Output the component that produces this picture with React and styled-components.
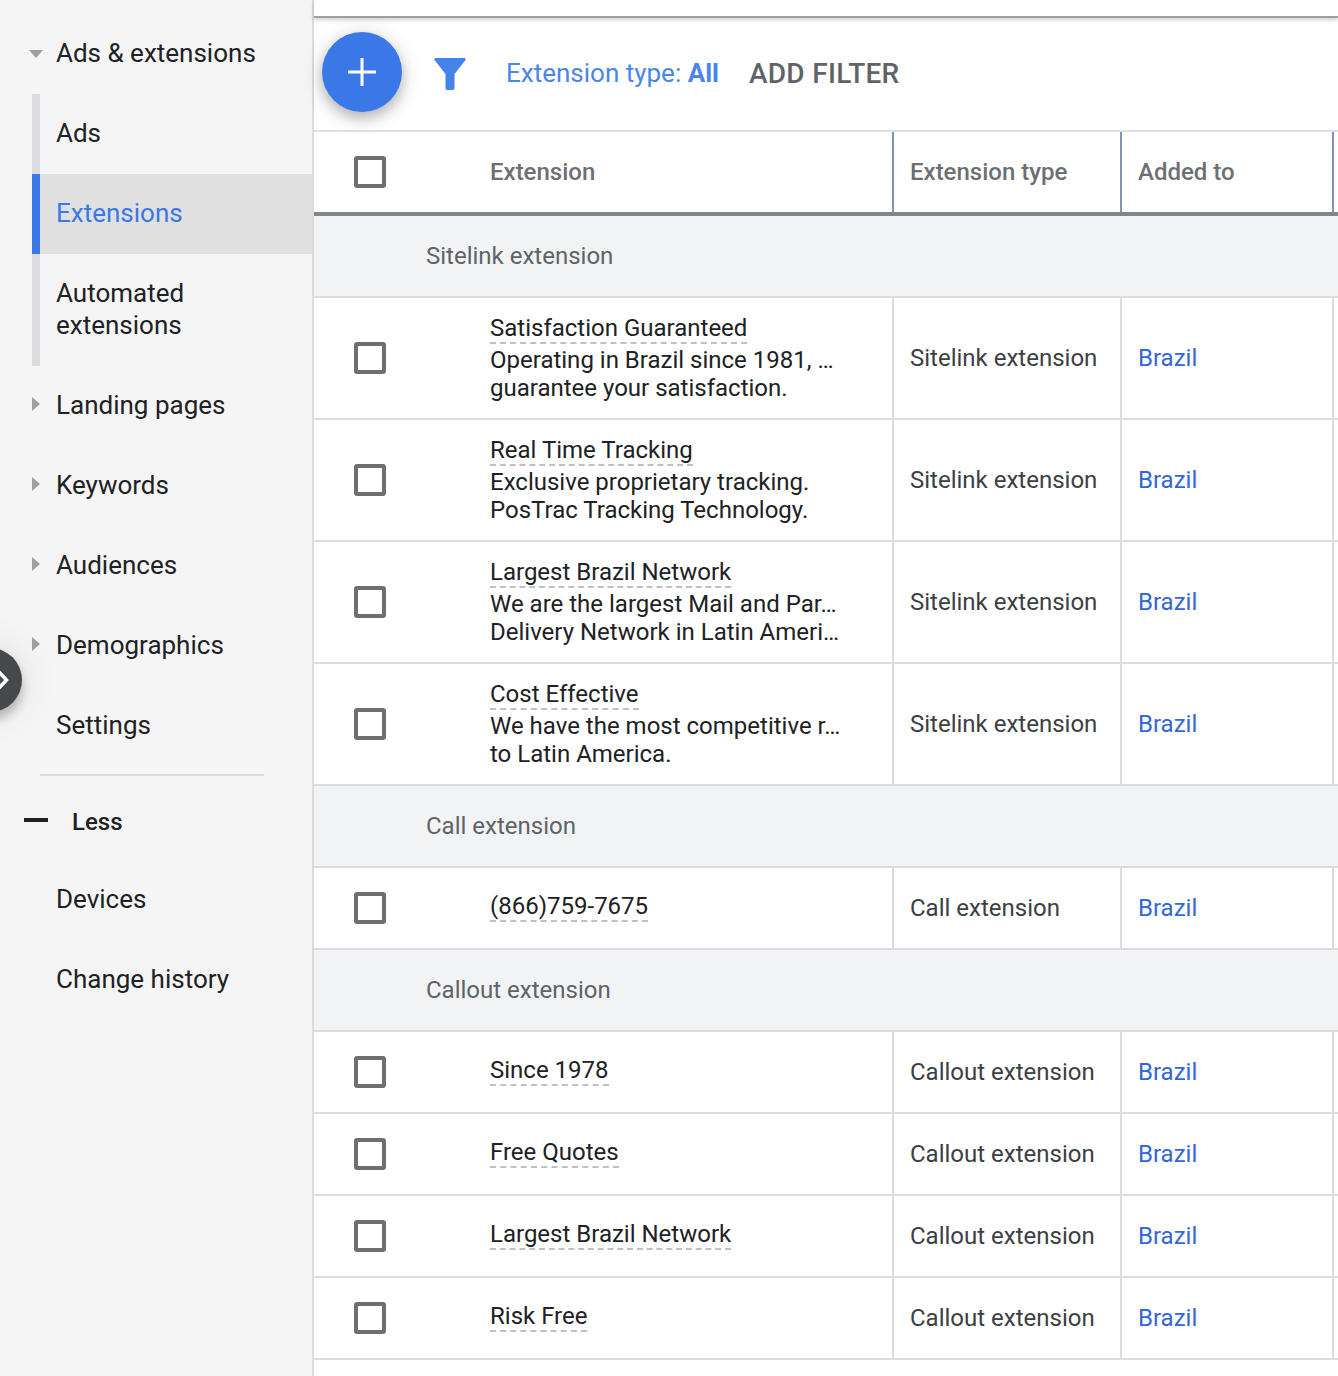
import React from 'react';
import styled, { createGlobalStyle } from 'styled-components';

const GlobalStyle = createGlobalStyle`
    html, body {
        margin: 0;
        height: 1376px;
        overflow: hidden;
        background: #ffffff;
        font-family: Roboto, "Liberation Sans", sans-serif;
    }
`

const Page = styled.div`
    position: relative;
    width: 1338px;
    height: 1376px;
    overflow: hidden;
    display: flex;
    flex-direction: row;
`

const Sidebar = styled.nav`
    box-sizing: border-box;
    width: 314px;
    flex: none;
    padding: 14px 0 0 0;
    background-color: #f5f5f5;
    border-right: 2px solid #dadce0;
    display: flex;
    flex-direction: column;
`

const NavItem = styled.div`
    box-sizing: border-box;
    height: 80px;
    padding: 0 0 2px 56px;
    position: relative;
    display: flex;
    align-items: center;
    font-size: 26px;
    color: #202124;
`

const Caret = styled.svg`
    position: absolute;
    left: ${props => props.$left}px;
    top: ${props => props.$top}px;
    fill: #9aa0a6;
`

const SubNav = styled.div`
    display: flex;
    flex-direction: column;
`

const SubItem = styled.div`
    box-sizing: border-box;
    min-height: 80px;
    padding: ${props => props.$tall ? '23px 0 25px 16px' : '0 0 2px 16px'};
    margin-left: 32px;
    display: flex;
    align-items: center;
    font-size: 26px;
    line-height: 32px;
    border-left: 8px solid ${props => props.$active ? '#3b78e7' : '#dadce0'};
    background-color: ${props => props.$active ? '#e0e0e0' : 'transparent'};
    color: ${props => props.$active ? '#3b78e7' : '#202124'};
`

const Divider = styled.div`
    height: 2px;
    margin: 8px 48px 0 40px;
    background-color: #dadce0;
`

const LessRow = styled.div`
    box-sizing: border-box;
    height: 84px;
    padding: 8px 0 0 24px;
    display: flex;
    align-items: center;
    font-size: 24px;
    font-weight: 500;
    color: #202124;
`

const LessDash = styled.span`
    width: 24px;
    height: 4px;
    margin: -4px 24px 0 0;
    background-color: #202124;
`

const Collapse = styled.button`
    position: absolute;
    left: -42px;
    top: 648px;
    width: 64px;
    height: 64px;
    padding: 0 12px 0 0;
    border: none;
    border-radius: 50%;
    background-color: #46484b;
    box-shadow: 0 8px 10px rgba(60, 64, 67, 0.3), 0 0 36px rgba(60, 64, 67, 0.14);
    display: flex;
    align-items: center;
    justify-content: flex-end;
`

const Main = styled.main`
    flex: 1;
    min-width: 0;
    display: flex;
    flex-direction: column;
`

const TopBar = styled.div`
    height: 16px;
    flex: none;
    border-bottom: 2px solid #9aa0a6;
    box-shadow: 0 2px 4px rgba(60, 64, 67, 0.25);
`

const Toolbar = styled.div`
    box-sizing: border-box;
    height: 114px;
    flex: none;
    padding-left: 8px;
    border-bottom: 2px solid #e0e0e0;
    display: flex;
    align-items: flex-start;
`

const Fab = styled.button`
    width: 80px;
    height: 80px;
    margin-top: 14px;
    padding: 0;
    border: none;
    border-radius: 50%;
    background-color: #3b78e7;
    box-shadow: 0 6px 14px rgba(60, 64, 67, 0.35), 0 2px 24px rgba(60, 64, 67, 0.12);
    display: flex;
    align-items: center;
    justify-content: center;
`

const FilterIcon = styled.svg`
    margin: 39px 0 0 31px;
`

const FilterLabel = styled.div`
    margin: 39px 0 0 39px;
    font-size: 26px;
    line-height: 32px;
    color: #4a86e8;
    white-space: nowrap;

    b {
        font-weight: 700;
    }
`

const AddFilter = styled.div`
    margin: 40px 0 0 30px;
    font-size: 28px;
    line-height: 32px;
    font-weight: 500;
    letter-spacing: 0.3px;
    color: #5f6368;
    white-space: nowrap;
`

const Row = styled.div`
    box-sizing: border-box;
    width: 1024px;
    height: ${props => props.$height}px;
    flex: none;
    display: flex;
    border-bottom: ${props => props.$head ? '4px solid #80868b' : '2px solid #dadce0'};
`

const CheckCell = styled.div`
    box-sizing: border-box;
    width: 580px;
    flex: none;
    padding-left: 40px;
    border-right: 2px solid ${props => props.$head ? '#7f93bb' : '#dadce0'};
    display: flex;
    align-items: center;
`

const Checkbox = styled.span`
    box-sizing: border-box;
    width: 32px;
    height: 32px;
    flex: none;
    margin-right: 104px;
    border: 4px solid #6d6f72;
    border-radius: 3px;
    background-color: #ffffff;
`

const Cell = styled.div`
    box-sizing: border-box;
    width: ${props => props.$width}px;
    flex: none;
    padding-left: 16px;
    border-right: 2px solid ${props => props.$head ? '#7f93bb' : '#dadce0'};
    display: flex;
    align-items: center;
    font-size: 24px;
    color: #3c4043;
`

const HeadText = styled.span`
    font-size: 24px;
    font-weight: 500;
    color: #6d6f72;
`

const BrazilLink = styled.a`
    color: #3367d6;
`

const GroupRow = styled.div`
    box-sizing: border-box;
    width: 1024px;
    height: 82px;
    flex: none;
    padding-left: 112px;
    display: flex;
    align-items: center;
    font-size: 24px;
    color: #5f6368;
    background-color: #f1f3f4;
    border-bottom: 2px solid #dadce0;
`

const ExtensionText = styled.div`
    display: flex;
    flex-direction: column;
    align-items: flex-start;
    font-size: 24px;
    line-height: 28px;
    color: #202124;
    white-space: nowrap;
`

const Title = styled.span`
    border-bottom: 2px dashed #bdc1c6;
    margin-bottom: 2px;
`

const Chevron = styled.svg`
    flex: none;
    fill: none;
    stroke: #ffffff;
    stroke-width: 3.5;
`

const groups = [
    {
        name: 'Sitelink extension',
        items: [
            { title: 'Satisfaction Guaranteed', lines: ['Operating in Brazil since 1981, …', 'guarantee your satisfaction.'] },
            { title: 'Real Time Tracking', lines: ['Exclusive proprietary tracking.', 'PosTrac Tracking Technology.'] },
            { title: 'Largest Brazil Network', lines: ['We are the largest Mail and Par…', 'Delivery Network in Latin Ameri…'] },
            { title: 'Cost Effective', lines: ['We have the most competitive r…', 'to Latin America.'] },
        ],
    },
    {
        name: 'Call extension',
        items: [{ title: '(866)759-7675' }],
    },
    {
        name: 'Callout extension',
        items: [
            { title: 'Since 1978' },
            { title: 'Free Quotes' },
            { title: 'Largest Brazil Network' },
            { title: 'Risk Free' },
        ],
    },
];

const CaretRight = ({ top }) => (
    <Caret $left={32} $top={top} width="8" height="14" viewBox="0 0 8 14">
        <path d="M0 0l8 7-8 7z" />
    </Caret>
);

const ExtensionRow = ({ item, type }) => (
    <Row $height={item.lines ? 122 : 82}>
        <CheckCell>
            <Checkbox />
            <ExtensionText>
                <Title>{item.title}</Title>
                {item.lines && item.lines.map((line, i) => <span key={i}>{line}</span>)}
            </ExtensionText>
        </CheckCell>
        <Cell $width={228}>{type}</Cell>
        <Cell $width={212}><BrazilLink>Brazil</BrazilLink></Cell>
    </Row>
);

export default function App() {
    return (
        <Page>
            <GlobalStyle />
            <Sidebar>
                <NavItem>
                    <Caret $left={29} $top={36} width="14" height="8" viewBox="0 0 14 8">
                        <path d="M0 0h14l-7 8z" />
                    </Caret>
                    Ads &amp; extensions
                </NavItem>
                <SubNav>
                    <SubItem>Ads</SubItem>
                    <SubItem $active>Extensions</SubItem>
                    <SubItem $tall>Automated<br />extensions</SubItem>
                </SubNav>
                <NavItem><CaretRight top={31} />Landing pages</NavItem>
                <NavItem><CaretRight top={31} />Keywords</NavItem>
                <NavItem><CaretRight top={31} />Audiences</NavItem>
                <NavItem><CaretRight top={31} />Demographics</NavItem>
                <NavItem>Settings</NavItem>
                <Divider />
                <LessRow><LessDash />Less</LessRow>
                <NavItem>Devices</NavItem>
                <NavItem>Change history</NavItem>
            </Sidebar>
            <Collapse>
                <Chevron width="14" height="24" viewBox="0 0 14 24">
                    <path d="M3 4l7.500 8-7.500 8" />
                </Chevron>
            </Collapse>
            <Main>
                <TopBar />
                <Toolbar>
                    <Fab>
                        <svg width="28" height="28" viewBox="0 0 28 28" fill="#ffffff">
                            <path d="M12.500 0h3v12.500H28v3H15.500V28h-3V15.500H0v-3h12.500z" />
                        </svg>
                    </Fab>
                    <FilterIcon width="34" height="34" viewBox="0 0 34 34" fill="#4583ea">
                        <path d="M2.500 1h29c1 0 1.500 1 1 2L21.500 17v14c0 1-.5 2-2 2h-5c-1.500 0-2-1-2-2V17L1.500 3c-.5-1 0-2 1-2z" />
                    </FilterIcon>
                    <FilterLabel>Extension type: <b>All</b></FilterLabel>
                    <AddFilter>ADD FILTER</AddFilter>
                </Toolbar>
                <Row $head $height={84}>
                    <CheckCell $head>
                        <Checkbox />
                        <HeadText>Extension</HeadText>
                    </CheckCell>
                    <Cell $head $width={228}><HeadText>Extension type</HeadText></Cell>
                    <Cell $head $width={212}><HeadText>Added to</HeadText></Cell>
                </Row>
                {groups.map(group => (
                    <React.Fragment key={group.name}>
                        <GroupRow>{group.name}</GroupRow>
                        {group.items.map((item, i) => (
                            <ExtensionRow key={i} item={item} type={group.name} />
                        ))}
                    </React.Fragment>
                ))}
            </Main>
        </Page>
    );
}
